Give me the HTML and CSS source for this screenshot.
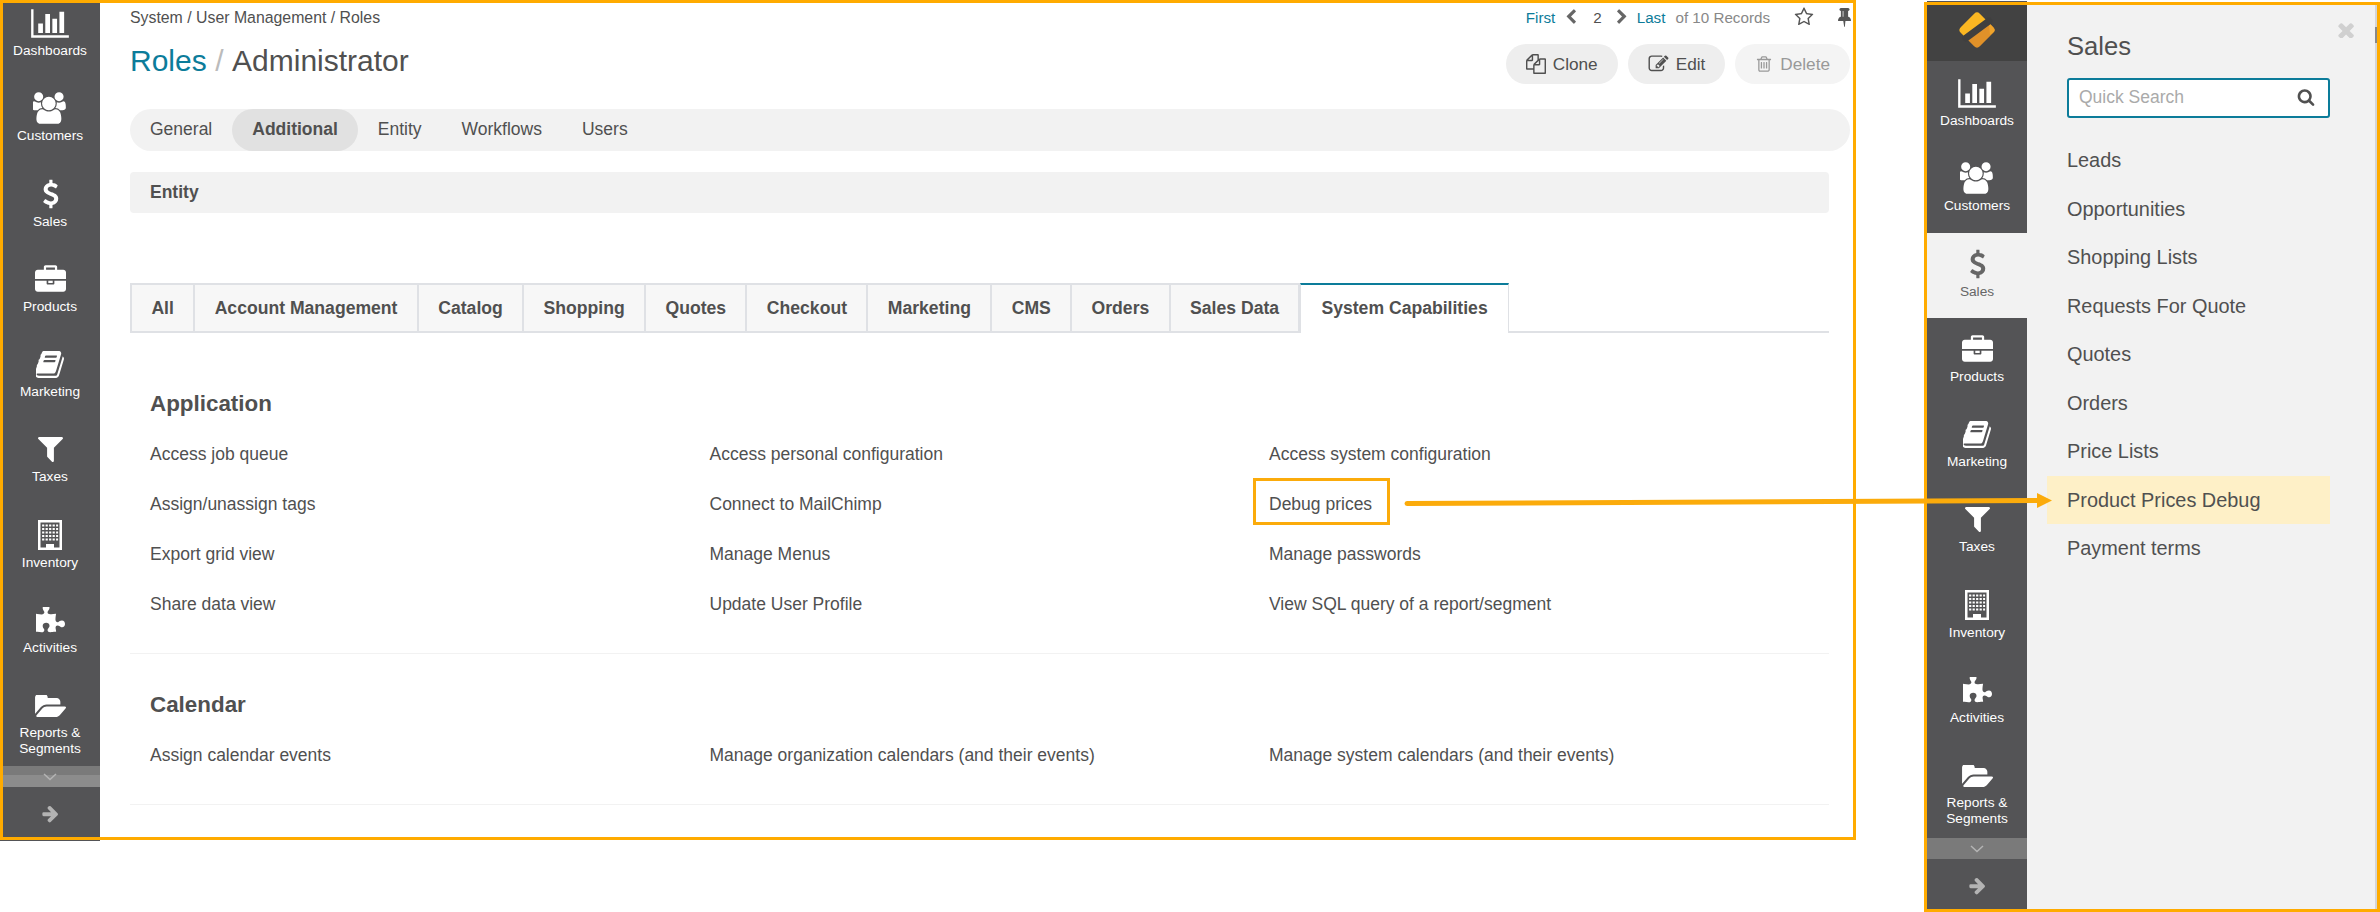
FILE: index.html
```html
<!DOCTYPE html>
<html lang="en">
<head>
<meta charset="UTF-8">
<title>Roles / Administrator</title>
<link rel="stylesheet" href="styles.css">
</head>
<body>

<!-- icon sprite -->
<svg class="sprite" xmlns="http://www.w3.org/2000/svg">
  <symbol id="i-chart" viewBox="0 0 2048 1792"><path d="M640 896v512h-256v-512h256zm384-512v1024h-256v-1024h256zm1024 1152v128h-2048v-1536h128v1408h1920zm-640-896v768h-256v-768h256zm384-384v1152h-256v-1152h256z"/></symbol>
  <symbol id="i-users" viewBox="0 0 1920 1792"><path d="M529 896q-162 5-265 128h-134q-82 0-138-40.500t-56-118.500q0-353 124-353 6 0 43.500 21t97.500 42.500 119 21.500q67 0 133-23-5 37-5 66 0 139 81 256zm1071 637q0 120-73 189.500t-194 69.500h-874q-121 0-194-69.500t-73-189.500q0-53 3.500-103.500t14-109 26.500-108.500 43-97.500 62-81 85.500-53.500 111.500-20q10 0 43 21.500t73 48 107 48 135 21.500 135-21.500 107-48 73-48 43-21.500q61 0 111.500 20t85.500 53.500 62 81 43 97.500 26.500 108.500 14 109 3.500 103.500zm-1024-1277q0 106-75 181t-181 75-181-75-75-181 75-181 181-75 181 75 75 181zm704 384q0 159-112.500 271.500t-271.500 112.500-271.500-112.500-112.500-271.500 112.500-271.500 271.500-112.500 271.500 112.500 112.500 271.500zm576 225q0 78-56 118.500t-138 40.500h-134q-103-123-265-128 81-117 81-256 0-29-5-66 66 23 133 23 59 0 119-21.500t97.500-42.500 43.500-21q124 0 124 353zm-128-609q0 106-75 181t-181 75-181-75-75-181 75-181 181-75 181 75 75 181z"/></symbol>
  <symbol id="i-dollar" viewBox="350 0 1060 1792"><path d="M1362 1185q0 153-99.500 263.500t-258.500 136.500v175q0 14-9 23t-23 9h-135q-13 0-22.500-9.500t-9.500-22.500v-175q-66-9-127.500-31t-101.500-44.500-74-48-46.500-37.500-17.500-18q-17-21-2-41l103-135q7-10 23-12 15-2 24 9l2 2q113 99 243 125 37 8 74 8 81 0 142.500-43t61.500-122q0-28-15-53t-33.500-42-58.500-37.500-66-32-80-32.500q-39-16-61.500-25t-61.500-26.500-62.500-31-56.500-35.500-53.500-42.500-43.500-49-35.500-58-21-66.500-8.500-78q0-138 98-242t255-134v-180q0-13 9.500-22.500t22.500-9.500h135q14 0 23 9t9 23v176q57 6 110.500 23t87 33.500 63.500 37.500 39 29 15 14q17 18 5 38l-81 146q-8 15-23 16-14 3-27-7-3-3-14.500-12t-39-26.500-58.500-32-74.500-26-85.500-11.500q-95 0-155 43t-60 111q0 26 8.500 48t29.500 41.500 39.500 33 56 31 60.500 27 70 27.500q53 20 81 31.500t76 35 75.500 42.500 62 50 53 63.500 31.500 76.500 13 94z"/></symbol>
  <symbol id="i-briefcase" viewBox="0 0 1792 1536"><path d="M640 256h512v-128h-512v128zm1152 640v480q0 66-47 113t-113 47h-1472q-66 0-113-47t-47-113v-480h672v160q0 26 19 45t45 19h320q26 0 45-19t19-45v-160h672zm-768 0v128h-256v-128h256zm768-480v384h-1792v-384q0-66 47-113t113-47h352v-160q0-40 28-68t68-28h576q40 0 68 28t28 68v160h352q66 0 113 47t47 113z"/></symbol>
  <symbol id="i-book" viewBox="100 130 1600 1530"><path d="M1639 478q40 57 18 129l-275 906q-19 64-76.500 107.500t-122.500 43.500h-923q-77 0-148.500-53.500t-99.500-131.500q-24-67-2-127 0-4 3-27t4-37q1-8-3-21.500t-3-19.500q2-11 8-21t16.500-23.500 16.500-23.500q23-38 45-91.500t30-91.500q3-10 .5-30t-.5-28q3-11 17-28t17-23q21-36 42-92t25-90q1-9-2.500-32t.5-28q4-13 22-30.500t22-22.500q19-26 42.500-84.500t27.500-96.500q1-8-3-25.500t-2-26.500q2-8 9-18t18-23 17-21q8-12 16.500-30.500t15-35 16-36 19.500-32 26.500-23.500 36-11.500 47.500 5.500l-1 3q38-9 51-9h761q74 0 114 56t18 130l-274 906q-36 119-71.500 153.500t-128.500 34.500h-869q-27 0-38 15-11 16-1 43 24 70 144 70h923q29 0 56-15.500t35-41.500l300-987q7-22 5-57 38 15 59 43zm-1064 2q-4 13 2 22.500t20 9.500h608q13 0 25.500-9.500t16.500-22.500l21-64q4-13-2-22.500t-20-9.500h-608q-13 0-25.500 9.500t-16.500 22.500zm-83 256q-4 13 2 22.500t20 9.500h608q13 0 25.500-9.500t16.500-22.500l21-64q4-13-2-22.500t-20-9.500h-608q-13 0-25.500 9.500t-16.500 22.500z"/></symbol>
  <symbol id="i-filter" viewBox="190 256 1412 1408"><path d="M1595 295q17 41-14 70l-493 493v742q0 42-39 59-13 5-25 5-27 0-45-19l-256-256q-19-19-19-45v-486l-493-493q-31-29-14-70 17-39 59-39h1280q42 0 59 39z"/></symbol>
  <symbol id="i-building" viewBox="0 0 24 30"><path fill-rule="evenodd" d="M0 0h24v30H0zM2.500 2.500v25h5.500v-3.500h8v3.500h5.500v-25z"/><path fill="none" stroke="currentColor" stroke-width="2.200" stroke-dasharray="2.200 1.300" d="M4.100 5.500h16M4.100 9h16M4.100 12.500h16M4.100 16h16M4.100 19.500h16"/></symbol>
  <symbol id="i-puzzle" viewBox="0 128 1664 1536"><path d="M1664 1098q0 81-44.500 135t-123.500 54q-41 0-77.500-17.500t-59-38-56.500-38-71-17.500q-110 0-110 124 0 39 16 115t15 115v5q-22 0-33 1-34 3-97.500 11.500t-115.500 13.500-98 5q-61 0-103-26.500t-42-83.500q0-37 17.500-71t38-56.500 38-59 17.500-77.500q0-79-54-123.500t-135-44.500q-84 0-143 45.500t-59 127.500q0 43 15 83t33.500 64.500 33.500 53 15 50.500q0 45-46 89-37 35-117 35-95 0-245-24-9-2-27.500-4t-27.500-4l-13-2q-1 0-3-1-2 0-2-1v-1024q2 1 17.500 3.500t34 5 21.500 3.500q150 24 245 24 80 0 117-35 46-44 46-89 0-22-15-50.500t-33.500-53-33.500-64.500-15-83q0-82 59-127.500t144-45.500q80 0 134 44.500t54 123.500q0 41-17.500 77.500t-38 59-38 56.500-17.500 71q0 57 42 83.500t103 26.500q64 0 180-15t163-17v2q-1 2-3.500 17.500t-5 34-3.500 21.500q-24 150-24 245 0 80 35 117 44 46 89 46 22 0 50.500-15t53-33.500 64.500-33.500 83-15q82 0 127.500 59t45.500 143z"/></symbol>
  <symbol id="i-folder" viewBox="0 256 1943 1280"><path d="M1943 952q0 31-31 66l-336 396q-43 51-120.500 86.500t-143.500 35.500h-1088q-34 0-60.500-13t-26.500-43q0-31 31-66l336-396q43-51 120.500-86.500t143.500-35.500h1088q34 0 60.500 13t26.500 43zm-343-344v160h-832q-94 0-197 47.500t-164 119.500l-337 396-5 6q0-4-.5-12.500t-.5-12.500v-960q0-92 66-158t158-66h320q92 0 158 66t66 158v32h544q92 0 158 66t66 158z"/></symbol>
  <symbol id="i-arrow" viewBox="0 0 1792 1792"><path d="M1600 960q0 54-37 91l-651 651q-39 37-91 37-51 0-90-37l-75-75q-38-38-38-91t38-91l293-293h-704q-52 0-84.500-37.500t-32.500-90.500v-128q0-53 32.500-90.500t84.500-37.500h704l-293-294q-38-36-38-90t38-90l75-75q38-38 90-38 53 0 91 38l651 651q37 35 37 90z"/></symbol>
  <symbol id="i-prev" viewBox="0 0 1792 1792"><path d="M1427 301l-531 531 531 531q19 19 19 45t-19 45l-166 166q-19 19-45 19t-45-19l-742-742q-19-19-19-45t19-45l742-742q19-19 45-19t45 19l166 166q19 19 19 45t-19 45z"/></symbol>
  <symbol id="i-next" viewBox="0 0 1792 1792"><path d="M1363 877l-742 742q-19 19-45 19t-45-19l-166-166q-19-19-19-45t19-45l531-531-531-531q-19-19-19-45t19-45l166-166q19-19 45-19t45 19l742 742q19 19 19 45t-19 45z"/></symbol>
  <symbol id="i-star" viewBox="0 0 1792 1792"><path d="M1201 1004l306-297-422-62-189-382-189 382-422 62 306 297-73 421 378-199 377 199zm527-357q0 22-26 48l-363 354 86 500q1 7 1 20 0 50-41 50-19 0-40-12l-449-236-449 236q-22 12-40 12-21 0-31.500-14.500t-10.500-35.500q0-6 2-20l86-500-364-354q-25-27-25-48 0-37 56-46l502-73 225-455q19-41 49-41t49 41l225 455 502 73q56 9 56 46z"/></symbol>
  <symbol id="i-pin" viewBox="0 128 1152 1664"><path d="M480 864v-448q0-14-9-23t-23-9-23 9-9 23v448q0 14 9 23t23 9 23-9 9-23zm672 352q0 26-19 45t-45 19h-429l-51 483q-2 12-10.500 20.500t-20.500 8.500h-1q-27 0-32-27l-76-485h-404q-26 0-45-19t-19-45q0-123 78.500-221.500t177.500-98.500v-512q-52 0-90-38t-38-90 38-90 90-38h640q52 0 90 38t38 90-38 90-90 38v512q99 0 177.500 98.500t78.500 221.500z"/></symbol>
  <symbol id="i-clone" viewBox="0 0 1792 1792"><path d="M1696 384q40 0 68 28t28 68v1216q0 40-28 68t-68 28h-960q-40 0-68-28t-28-68v-288h-544q-40 0-68-28t-28-68v-672q0-40 20-88t48-76l408-408q28-28 76-48t88-20h416q40 0 68 28t28 68v328q68-40 128-40h416zm-544 213l-299 299h299v-299zm-640-384l-299 299h299v-299zm196 647l316-316v-416h-384v416q0 40-28 68t-68 28h-416v640h512v-256q0-40 20-88t48-76zm956 804v-1152h-384v416q0 40-28 68t-68 28h-416v640h896z"/></symbol>
  <symbol id="i-edit" viewBox="0 0 1792 1792"><path d="M888 1184l116-116-152-152-116 116v56h96v96h56zm440-720q-16-16-33 1l-350 350q-17 17-1 33t33-1l350-350q17-17 1-33zm80 594v190q0 119-84.500 203.500t-203.500 84.500h-832q-119 0-203.500-84.500t-84.500-203.500v-832q0-119 84.500-203.500t203.500-84.500h832q63 0 117 25 15 7 18 23 3 17-9 29l-49 49q-14 14-32 8-23-6-45-6h-832q-66 0-113 47t-47 113v832q0 66 47 113t113 47h832q66 0 113-47t47-113v-126q0-13 9-22l64-64q15-15 35-7t20 29zm-96-738l288 288-672 672h-288v-288zm444 132l-92 92-288-288 92-92q28-28 68-28t68 28l152 152q28 28 28 68t-28 68z"/></symbol>
  <symbol id="i-trash" viewBox="0 0 1792 1792"><path d="M704 736v576q0 14-9 23t-23 9h-64q-14 0-23-9t-9-23v-576q0-14 9-23t23-9h64q14 0 23 9t9 23zm256 0v576q0 14-9 23t-23 9h-64q-14 0-23-9t-9-23v-576q0-14 9-23t23-9h64q14 0 23 9t9 23zm256 0v576q0 14-9 23t-23 9h-64q-14 0-23-9t-9-23v-576q0-14 9-23t23-9h64q14 0 23 9t9 23zm128 724v-948h-896v948q0 22 7 40.500t14.500 27 10.500 8.500h832q3 0 10.500-8.500t14.500-27 7-40.500zm-672-1076h448l-48-117q-7-9-17-11h-317q-10 2-17 11zm928 32v64q0 14-9 23t-23 9h-96v948q0 83-47 143.500t-113 60.500h-832q-66 0-113-58.500t-47-141.500v-952h-96q-14 0-23-9t-9-23v-64q0-14 9-23t23-9h309l70-167q15-37 54-63t79-26h320q40 0 79 26t54 63l70 167h309q14 0 23 9t9 23z"/></symbol>
  <symbol id="i-search" viewBox="0 0 1792 1792"><path d="M1216 832q0-185-131.500-316.500t-316.500-131.500-316.500 131.500-131.500 316.500 131.500 316.500 316.500 131.500 316.500-131.500 131.500-316.500zm512 832q0 52-38 90t-90 38q-54 0-90-38l-343-342q-179 124-399 124-143 0-273.500-55.500t-225-150-150-225-55.500-273.500 55.500-273.500 150-225 225-150 273.500-55.500 273.500 55.500 225 150 150 225 55.500 273.500q0 220-124 399l343 343q37 37 37 90z"/></symbol>
  <symbol id="i-close" viewBox="280 280 1220 1220"><path d="M1490 1322q0 40-28 68l-136 136q-28 28-68 28t-68-28l-294-294-294 294q-28 28-68 28t-68-28l-136-136q-28-28-28-68t28-68l294-294-294-294q-28-28-28-68t28-68l136-136q28-28 68-28t68 28l294 294 294-294q28-28 68-28t68 28l136 136q28 28 28 68t-28 68l-294 294 294 294q28 28 28 68z"/></symbol>
  <clipPath id="logo-clip"><rect x="13.500" y="11.500" width="27" height="27" rx="4" transform="rotate(45 27 25)"/></clipPath>
</svg>

<div class="window window-main">
  <aside class="sidebar">
    <nav class="nav nav-scrolled">
      <a class="nav-item"><span class="nav-icon"><svg width="38" height="33"><use href="#i-chart"/></svg></span>Dashboards</a>
      <a class="nav-item"><span class="nav-icon"><svg width="34" height="32"><use href="#i-users"/></svg></span>Customers</a>
      <a class="nav-item"><span class="nav-icon"><svg width="17" height="32"><use href="#i-dollar"/></svg></span>Sales</a>
      <a class="nav-item"><span class="nav-icon"><svg width="31" height="27"><use href="#i-briefcase"/></svg></span>Products</a>
      <a class="nav-item"><span class="nav-icon"><svg width="29" height="27"><use href="#i-book"/></svg></span>Marketing</a>
      <a class="nav-item"><span class="nav-icon"><svg width="25" height="25"><use href="#i-filter"/></svg></span>Taxes</a>
      <a class="nav-item"><span class="nav-icon"><svg width="24" height="30"><use href="#i-building"/></svg></span>Inventory</a>
      <a class="nav-item"><span class="nav-icon"><svg width="29" height="27"><use href="#i-puzzle"/></svg></span>Activities</a>
      <a class="nav-item nav-item-wide"><span class="nav-icon"><svg width="32" height="23"><use href="#i-folder"/></svg></span>Reports &amp;<br>Segments</a>
    </nav>
    <div class="nav-more nav-more-split"><svg width="14" height="8" viewBox="0 0 14 8"><path d="M1 1l6 5.500L13 1" fill="none" stroke="currentColor" stroke-width="1.500"/></svg></div>
    <div class="nav-foot"><svg width="19" height="19"><use href="#i-arrow"/></svg></div>
  </aside>

  <main class="content">
    <div class="topbar">
      <div class="breadcrumb">System / User Management / Roles</div>
      <div class="pager">
        <a class="link">First</a>
        <svg class="pager-arrow" width="16" height="16"><use href="#i-prev"/></svg>
        <span class="pager-num">2</span>
        <svg class="pager-arrow pager-arrow-next" width="16" height="16"><use href="#i-next"/></svg>
        <a class="link">Last</a>
        <span class="pager-total">of 10 Records</span>
        <svg class="pager-star" width="20" height="20"><use href="#i-star"/></svg>
        <svg class="pager-pin" width="13" height="19"><use href="#i-pin"/></svg>
      </div>
    </div>

    <div class="title-row">
      <h1 class="title"><a class="title-link">Roles</a><span class="title-sep">/</span>Administrator</h1>
      <div class="actions">
        <button class="btn"><svg width="20" height="20"><use href="#i-clone"/></svg>Clone</button>
        <button class="btn"><svg width="21" height="20"><use href="#i-edit"/></svg>Edit</button>
        <button class="btn btn-disabled"><svg width="18" height="18"><use href="#i-trash"/></svg>Delete</button>
      </div>
    </div>

    <div class="pills">
      <a class="pill">General</a>
      <a class="pill pill-active">Additional</a>
      <a class="pill">Entity</a>
      <a class="pill">Workflows</a>
      <a class="pill">Users</a>
    </div>

    <div class="section-bar">Entity</div>

    <div class="tabs">
      <a class="tab">All</a>
      <a class="tab">Account Management</a>
      <a class="tab">Catalog</a>
      <a class="tab">Shopping</a>
      <a class="tab">Quotes</a>
      <a class="tab">Checkout</a>
      <a class="tab">Marketing</a>
      <a class="tab">CMS</a>
      <a class="tab">Orders</a>
      <a class="tab">Sales Data</a>
      <a class="tab tab-active">System Capabilities</a>
    </div>

    <section class="group group-first">
      <h3>Application</h3>
      <div class="caps">
        <div>Access job queue</div>
        <div>Access personal configuration</div>
        <div>Access system configuration</div>
        <div>Assign/unassign tags</div>
        <div>Connect to MailChimp</div>
        <div>Debug prices</div>
        <div>Export grid view</div>
        <div>Manage Menus</div>
        <div>Manage passwords</div>
        <div>Share data view</div>
        <div>Update User Profile</div>
        <div>View SQL query of a report/segment</div>
      </div>
    </section>

    <section class="group">
      <h3>Calendar</h3>
      <div class="caps">
        <div>Assign calendar events</div>
        <div>Manage organization calendars (and their events)</div>
        <div>Manage system calendars (and their events)</div>
      </div>
    </section>
  </main>
</div>

<div class="window window-menu">
  <aside class="sidebar">
    <div class="logo">
      <svg width="54" height="54" viewBox="0 0 54 54">
        <g clip-path="url(#logo-clip)">
          <path d="M0 0h54L0 46z" fill="#fbb722"/>
          <path d="M54 0v54H0V46z" fill="#e09129"/>
          <path d="M38 10l10 14-8 6z" fill="#eea32b"/>
        </g>
        <path d="M16 33L39 16" stroke="#3f3f3f" stroke-width="7" stroke-linecap="round"/>
      </svg>
    </div>
    <nav class="nav nav-open">
      <a class="nav-item"><span class="nav-icon"><svg width="38" height="33"><use href="#i-chart"/></svg></span>Dashboards</a>
      <a class="nav-item"><span class="nav-icon"><svg width="34" height="32"><use href="#i-users"/></svg></span>Customers</a>
      <a class="nav-item nav-item-active"><span class="nav-icon"><svg width="17" height="32"><use href="#i-dollar"/></svg></span>Sales</a>
      <a class="nav-item"><span class="nav-icon"><svg width="31" height="27"><use href="#i-briefcase"/></svg></span>Products</a>
      <a class="nav-item"><span class="nav-icon"><svg width="29" height="27"><use href="#i-book"/></svg></span>Marketing</a>
      <a class="nav-item"><span class="nav-icon"><svg width="25" height="25"><use href="#i-filter"/></svg></span>Taxes</a>
      <a class="nav-item"><span class="nav-icon"><svg width="24" height="30"><use href="#i-building"/></svg></span>Inventory</a>
      <a class="nav-item"><span class="nav-icon"><svg width="29" height="27"><use href="#i-puzzle"/></svg></span>Activities</a>
      <a class="nav-item nav-item-wide"><span class="nav-icon"><svg width="32" height="23"><use href="#i-folder"/></svg></span>Reports &amp;<br>Segments</a>
    </nav>
    <div class="nav-more"><svg width="14" height="8" viewBox="0 0 14 8"><path d="M1 1l6 5.500L13 1" fill="none" stroke="currentColor" stroke-width="1.500"/></svg></div>
    <div class="nav-foot"><svg width="19" height="19"><use href="#i-arrow"/></svg></div>
  </aside>

  <div class="menu-panel">
    <svg class="menu-close" width="16" height="16"><use href="#i-close"/></svg>
    <div class="menu-handle"></div>
    <h2 class="menu-title">Sales</h2>
    <div class="search">
      <span class="search-text">Quick Search</span>
      <svg class="search-icon" width="18" height="18"><use href="#i-search"/></svg>
    </div>
    <ul class="menu-list">
      <li>Leads</li>
      <li>Opportunities</li>
      <li>Shopping Lists</li>
      <li>Requests For Quote</li>
      <li>Quotes</li>
      <li>Orders</li>
      <li>Price Lists</li>
      <li class="menu-hl">Product Prices Debug</li>
      <li>Payment terms</li>
    </ul>
  </div>
</div>

<!-- annotation drawn over both windows -->
<div class="callout"></div>
<svg class="callout-arrow" width="2380" height="912" viewBox="0 0 2380 912">
  <path d="M1407 503.500L2040 500.500" stroke="#fbab0b" stroke-width="5" stroke-linecap="round"/>
  <path d="M2037 493l15 7.500-15 7.500z" fill="#fbab0b"/>
</svg>

</body>
</html>
```

FILE: styles.css
```css
* {
  box-sizing: border-box;
}

body {
  margin: 0;
  background-color: #fff;
  font-family: "Liberation Sans", Arial, sans-serif;
  font-size: 17.5px;
  color: #505050;
  display: flex;
  align-items: flex-start;
  height: 912px;
  overflow: hidden;
  position: relative;
}

svg {
  fill: currentColor;
  display: block;
}

.sprite {
  position: absolute;
  width: 0;
  height: 0;
}

.window {
  display: flex;
  border: 3px solid #ffab00;
  flex-shrink: 0;
}

.window-main {
  width: 1856px;
  height: 840px;
}

.window-menu {
  width: 456px;
  height: 910px;
  margin-top: 2px;
  margin-left: 68px;
}

/* sidebar */
.sidebar {
  position: relative;
  width: 97px;
  flex-shrink: 0;
  display: flex;
  flex-direction: column;
  background-color: #545456;
  color: #fff;
}

/* the sidebar peeks out past the frame by one pixel */
.sidebar::after {
  content: "";
  position: absolute;
  width: 100px;
  height: 1px;
  background-color: #545456;
}

.window-main .sidebar::after {
  left: -3px;
  bottom: -4px;
}

.window-menu .sidebar {
  width: 100px;
}

.window-menu .sidebar::after {
  left: 0;
  top: -4px;
}

.nav {
  flex: 1;
  overflow: hidden;
}

.nav-scrolled .nav-item {
  padding-right: 3px;
}

.nav-scrolled .nav-item:first-child {
  margin-top: -11px;
}

.nav-open {
  padding-top: 1px;
}

.nav-item {
  display: block;
  height: 85.3px;
  padding-top: 16px;
  text-align: center;
  font-size: 13.7px;
  line-height: 15.5px;
}

.nav-item-active {
  background-color: #f2f2f2;
  color: #666;
}

.nav-item-wide {
  height: auto;
}

.nav-icon {
  display: flex;
  align-items: center;
  justify-content: center;
  height: 30px;
  margin-bottom: 5px;
}

.nav-item-wide .nav-icon {
  margin-top: 1px;
  margin-bottom: 4px;
}

.nav-more {
  height: 21px;
  flex-shrink: 0;
  display: flex;
  align-items: center;
  justify-content: center;
  background-color: #7a7a7a;
  color: #b4b4b4;
}

.nav-more-split {
  padding-right: 3px;
  background: linear-gradient(#7a7a7a 9px, #8c8c8c 9px);
}

.nav-foot {
  height: 50px;
  flex-shrink: 0;
  display: flex;
  align-items: center;
  justify-content: center;
  padding-top: 2px;
  color: #b3b3b3;
}

.window-main .nav-foot {
  padding-right: 3px;
}

/* main window */
.content {
  flex: 1;
  padding: 0 3px 0 30px;
}

.topbar {
  display: flex;
  justify-content: space-between;
  align-items: center;
  height: 28px;
  font-size: 15.2px;
}

.breadcrumb {
  margin-top: 2px;
  font-size: 15.85px;
}

.pager {
  display: flex;
  align-items: center;
  color: #888;
}

.link {
  color: #0c7c9a;
}

.pager-arrow {
  color: #666;
  margin: 0 6px 0 8px;
}

.pager-arrow-next {
  margin: 0 7px 0 4px;
}

.pager-num {
  color: #505050;
  margin: 0 8px 0 8px;
}

.pager-total {
  margin-left: 10px;
}

.pager-star {
  color: #555;
  margin-left: 24px;
}

.pager-pin {
  color: #555;
  margin-left: 24px;
  margin-right: -1px;
}

.title-row {
  display: flex;
  justify-content: space-between;
  align-items: center;
  margin-top: 13px;
  height: 40px;
}

.title {
  margin: -6px 0 0;
  font-size: 30px;
  font-weight: normal;
}

.title-link {
  color: #0c7c9a;
}

.title-sep {
  margin: 0 8.5px;
  color: #bbb;
}

.actions {
  display: flex;
  gap: 10px;
}

.btn {
  display: flex;
  align-items: center;
  gap: 7px;
  height: 40px;
  padding: 0 20px;
  border: none;
  border-radius: 20px;
  background-color: #eee;
  color: #505050;
  font: inherit;
  font-size: 17.2px;
}

.btn-disabled {
  background-color: #f4f4f4;
  color: #999;
}

.pills {
  display: flex;
  height: 42px;
  margin-top: 25px;
  border-radius: 21px;
  background-color: #f2f2f2;
}

.pill {
  padding: 0 20px;
  border-radius: 21px;
  line-height: 41px;
}

.pill-active {
  background-color: #e1e1e1;
  font-weight: bold;
}

.section-bar {
  height: 41px;
  margin: 21px 21px 0 0;
  padding-left: 20px;
  border-radius: 4px;
  background-color: #f2f2f2;
  font-weight: bold;
  line-height: 40px;
}

.tabs {
  display: flex;
  height: 50px;
  margin: 70px 21px 0 0;
  border-bottom: 2px solid #dfe1e5;
}

.tab {
  height: 50px;
  padding: 0 19.4px;
  border: 2px solid #dfe1e5;
  border-left-width: 0;
  background-color: #f7f7f7;
  font-size: 17.6px;
  font-weight: bold;
  line-height: 47px;
}

.tab:first-child {
  border-left-width: 2px;
}

.tab-active {
  padding: 0 20px;
  border-width: 2px 1px 0;
  border-color: #0c7c9a #dfe1e5 #fff;
  background-color: #fff;
}

.group {
  margin-right: 21px;
  padding: 36px 20px 24px;
  border-bottom: 1px solid #f2f2f2;
}

.group-first {
  margin-top: 20px;
}

.group h3 {
  margin: 0 0 10px;
  font-size: 22.4px;
  line-height: 30px;
}

.caps {
  display: grid;
  grid-template-columns: 559.500px 559.500px 1fr;
  grid-auto-rows: 50px;
  line-height: 50px;
}

/* slide-out menu */
.logo {
  height: 56px;
  flex-shrink: 0;
  display: flex;
  justify-content: center;
  background-color: #424242;
}

.menu-panel {
  flex: 1;
  position: relative;
  padding: 24px 45px 0 40px;
  background-color: #f2f2f2;
  border-right: 2px solid #d5d5d5;
}

.menu-close {
  position: absolute;
  top: 17px;
  right: 21px;
  color: #d0d0d0;
}

.menu-handle {
  position: absolute;
  top: 22px;
  right: -2px;
  width: 2px;
  height: 16px;
  background-color: #888;
}

.menu-title {
  margin: 0;
  font-size: 25.6px;
  font-weight: normal;
  line-height: 34px;
}

.search {
  display: flex;
  align-items: center;
  justify-content: space-between;
  height: 40px;
  margin-top: 15px;
  padding: 0 13px 0 10px;
  border: 2px solid #0c7c9a;
  border-radius: 3px;
  background-color: #fff;
}

.search-text {
  margin-top: -2px;
  color: #aaa;
}

.search-icon {
  margin-top: -2px;
}

.menu-list {
  list-style: none;
  margin: 18px 0 0;
  padding: 0;
  font-size: 19.9px;
}

.menu-list li {
  height: 48.500px;
  line-height: 48px;
}

.menu-hl {
  margin-left: -20px;
  padding-left: 20px;
  background-color: #fef0c7;
}

/* annotation */
.callout {
  position: absolute;
  left: 1253px;
  top: 478px;
  width: 137px;
  height: 47px;
  border: 3px solid #fbab0b;
}

.callout-arrow {
  position: absolute;
  left: 0;
  top: 0;
}
```
